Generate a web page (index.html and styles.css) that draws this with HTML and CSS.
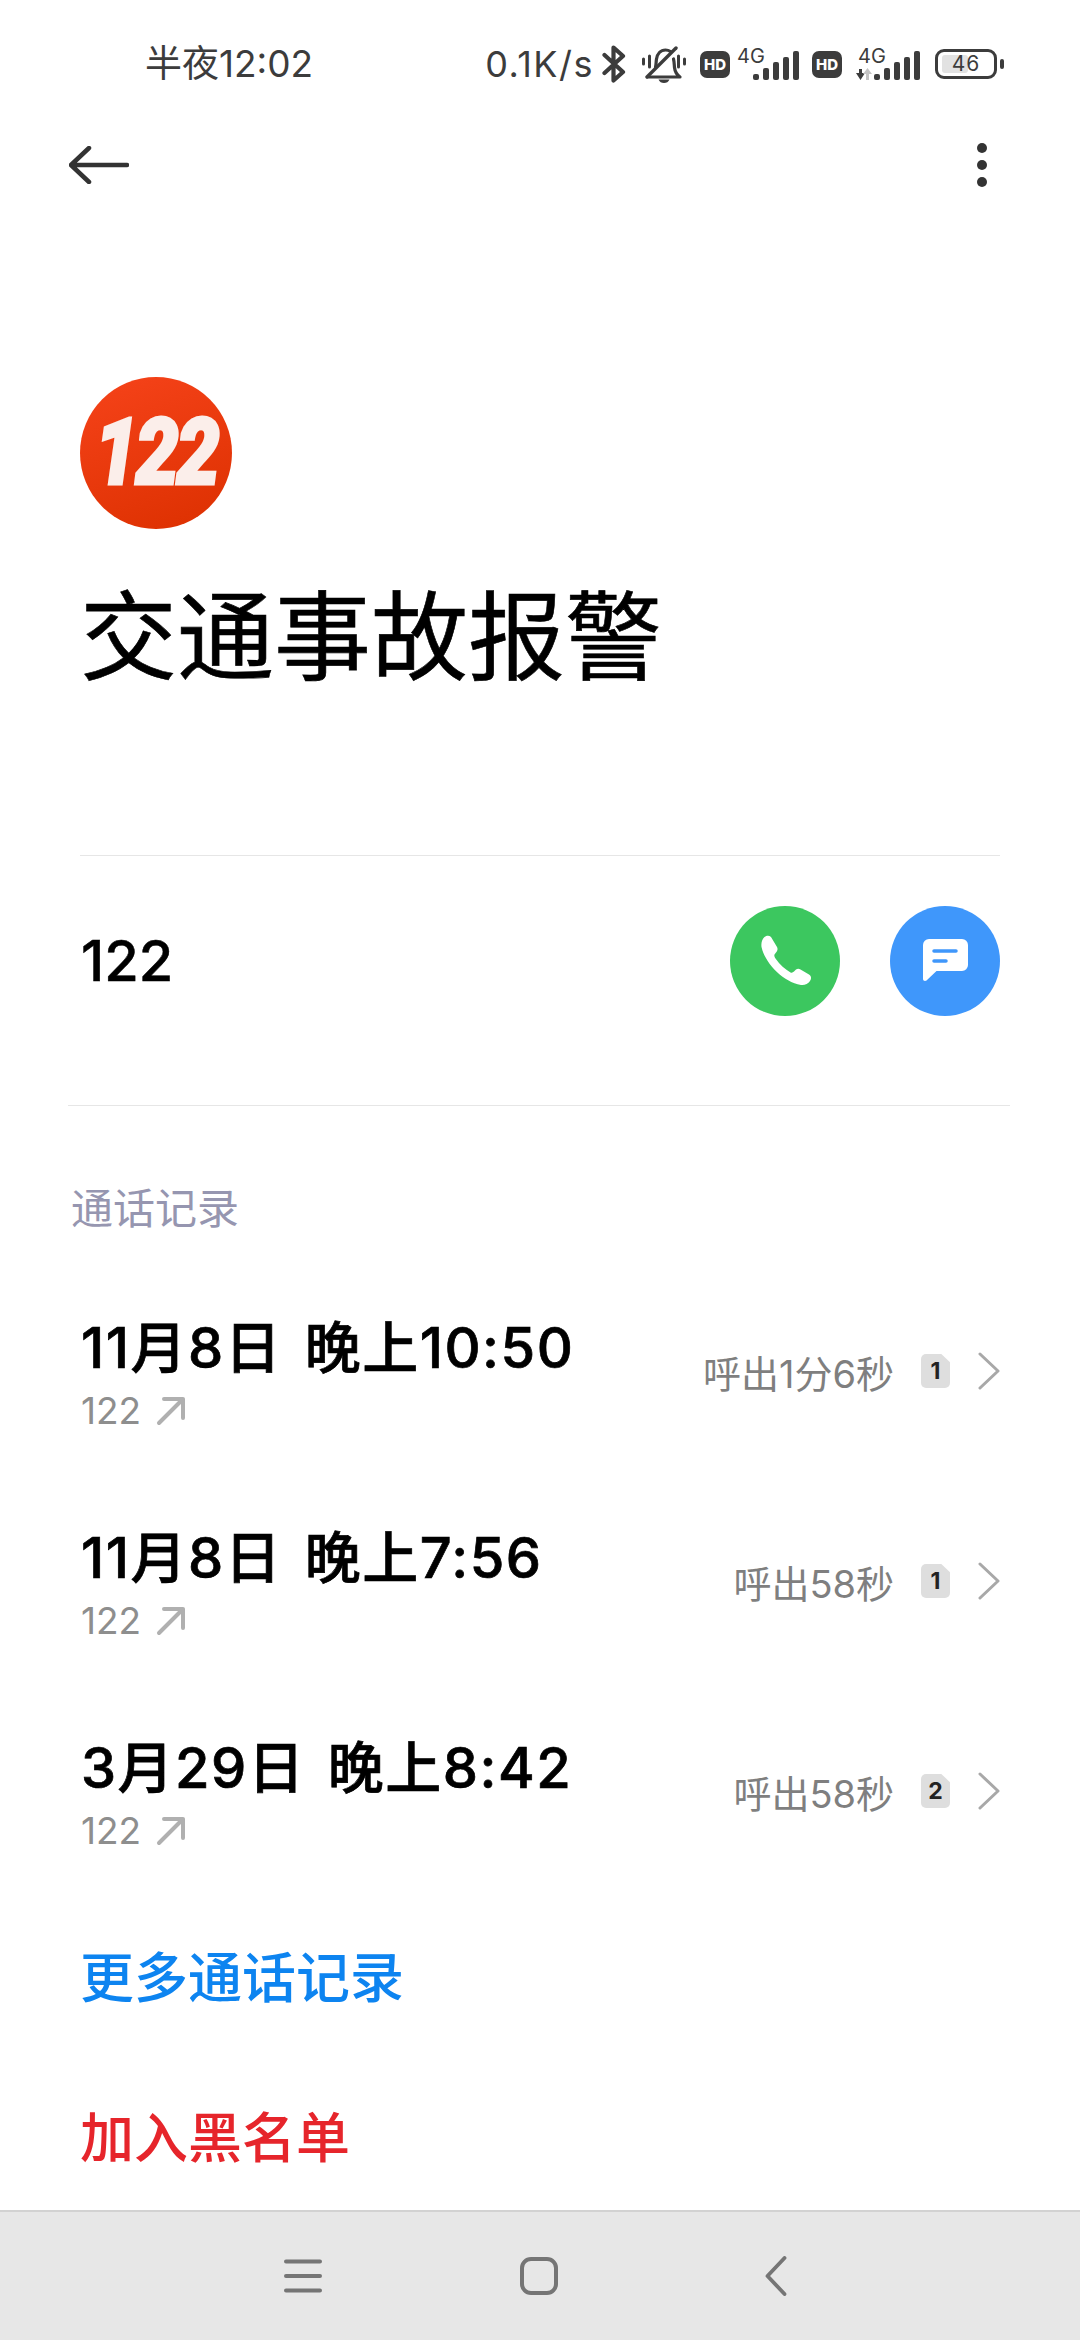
FILE: index.html
```html
<!DOCTYPE html>
<html lang="zh">
<head>
<meta charset="utf-8">
<title>交通事故报警</title>
<link rel="stylesheet" href="styles.css">
</head>
<body>
<div class="page">
  <header class="status">
    <span class="status-time">半夜12:02</span>
    <div class="status-right">
      <span class="status-speed">0.1K/s</span>
      <svg class="ic-bt" viewBox="0 0 24 38"><path d="M2.500 10 L21 27 L11.500 35.500 V2.500 L21 11 L2.500 28" fill="none" stroke="#3c3c3c" stroke-width="4.200" stroke-linecap="round" stroke-linejoin="round"/></svg>
      <svg class="ic-mute" viewBox="0 0 44 37"><g fill="none" stroke="#3c3c3c" stroke-linecap="round" stroke-linejoin="round"><path d="M1.500 13v5M7.500 10v11M42.500 13v5M36.500 10v11" stroke-width="3"/><path d="M6 31h32c-3.500-2.500-5-5-5.500-9.500-.3-3-.3-6-1-8.500M13.500 21c.7-2.500.5-5 1-8 .8-5 4-9 9-9 2 0 3.500.5 5 1.500" stroke-width="3.200"/><path d="M5 31 34 2" stroke-width="3.400"/></g><path d="M16.500 33.500h11c-1 2.500-3 3.500-5.500 3.500s-4.500-1-5.500-3.500z" fill="#3c3c3c"/></svg>
      <span class="hd">HD</span>
      <div class="sig">
        <span class="sig-label">4G</span>
        <svg class="sig-bars" viewBox="0 0 46 29"><g fill="#3c3c3c"><rect x="0" y="23" width="6" height="6" rx="2"/><rect x="10" y="17" width="6" height="12" rx="2"/><rect x="20" y="11" width="6" height="18" rx="2"/><rect x="30" y="6" width="6" height="23" rx="2"/><rect x="40" y="0" width="6" height="29" rx="2"/></g></svg>
      </div>
      <span class="hd hd-second">HD</span>
      <div class="sig sig-second">
        <span class="sig-label">4G</span>
        <svg class="sig-bars sig-bars-wide" viewBox="0 0 65 29"><path d="M4 18h3v4h3l-4.500 7L1 22h3z" fill="#3c3c3c"/><path d="M11 29v-6H8l4.500-6 4.500 6h-3v6z" fill="#c4c4c4"/><g fill="#3c3c3c"><rect x="19" y="23" width="6" height="6" rx="2"/><rect x="29" y="17" width="6" height="12" rx="2"/><rect x="39" y="11" width="6" height="18" rx="2"/><rect x="49" y="6" width="6" height="23" rx="2"/><rect x="59" y="0" width="6" height="29" rx="2"/></g></svg>
      </div>
      <div class="battery">
        <div class="battery-body"><span class="battery-fill"></span><span class="battery-num">46</span></div>
        <span class="battery-cap"></span>
      </div>
    </div>
  </header>

  <nav class="toolbar">
    <svg class="ic-back" viewBox="0 0 60 38"><path d="M20 2 2 19l18 17M2 19h56" fill="none" stroke="#333" stroke-width="4.500" stroke-linecap="round" stroke-linejoin="round"/></svg>
    <div class="more"><i></i><i></i><i></i></div>
  </nav>

  <section class="hero">
    <div class="logo"><span>122</span></div>
    <h1 class="title">交通事故报警</h1>
  </section>

  <section class="phone">
    <span class="phone-num">122</span>
    <div class="actions">
      <span class="action action-call">
        <svg viewBox="0 0 51 51"><path d="M3 2.500C5 .5 8 0 10 2L16 12C17 14 16.500 16 15 17.500L13.500 19.500C13 21 13.500 22 14.500 23.500C19 30 24 34 29.500 37.500C31 38 32 37.500 33 36.500L35 34.500C36.500 33.500 38 33.500 39.500 34.500L48 39.500C50.500 41 50.500 44 49 46C47 49 43.500 50.500 40 50C22 47 4 28 .5 12C0 8 1 4.500 3 2.500Z" fill="#fff"/></svg>
      </span>
      <span class="action action-msg">
        <svg viewBox="0 0 45 43"><path d="M6 0h33a6 6 0 0 1 6 6v20a6 6 0 0 1-6 6H13.500L3.500 41.500c-1.300 1-3.500.5-3.500-1.500V6a6 6 0 0 1 6-6z" fill="#fff"/><path d="M11 12h22M11 22h12" stroke="#3f97fb" stroke-width="3.500" stroke-linecap="round"/></svg>
      </span>
    </div>
  </section>

  <section class="log">
    <h2 class="log-head">通话记录</h2>
    <div class="log-list">
      <article class="row">
        <div class="row-main">
          <div class="row-title">11月8日 晚上10:50</div>
          <div class="row-sub">122<svg class="ic-out" viewBox="0 0 30 30"><path d="M8 3h19v19M27 3 3 27" fill="none" stroke="#b0b0b0" stroke-width="4" stroke-linecap="round" stroke-linejoin="round"/></svg></div>
        </div>
        <span class="row-dur">呼出1分6秒</span>
        <span class="sim">1</span>
        <svg class="ic-chev" viewBox="0 0 22 38"><path d="M2 2 20 19 2 36" fill="none" stroke="#a8a8a8" stroke-width="3" stroke-linecap="round" stroke-linejoin="round"/></svg>
      </article>
      <article class="row">
        <div class="row-main">
          <div class="row-title">11月8日 晚上7:56</div>
          <div class="row-sub">122<svg class="ic-out" viewBox="0 0 30 30"><path d="M8 3h19v19M27 3 3 27" fill="none" stroke="#b0b0b0" stroke-width="4" stroke-linecap="round" stroke-linejoin="round"/></svg></div>
        </div>
        <span class="row-dur">呼出58秒</span>
        <span class="sim">1</span>
        <svg class="ic-chev" viewBox="0 0 22 38"><path d="M2 2 20 19 2 36" fill="none" stroke="#a8a8a8" stroke-width="3" stroke-linecap="round" stroke-linejoin="round"/></svg>
      </article>
      <article class="row">
        <div class="row-main">
          <div class="row-title">3月29日 晚上8:42</div>
          <div class="row-sub">122<svg class="ic-out" viewBox="0 0 30 30"><path d="M8 3h19v19M27 3 3 27" fill="none" stroke="#b0b0b0" stroke-width="4" stroke-linecap="round" stroke-linejoin="round"/></svg></div>
        </div>
        <span class="row-dur">呼出58秒</span>
        <span class="sim">2</span>
        <svg class="ic-chev" viewBox="0 0 22 38"><path d="M2 2 20 19 2 36" fill="none" stroke="#a8a8a8" stroke-width="3" stroke-linecap="round" stroke-linejoin="round"/></svg>
      </article>
    </div>
    <a class="link link-more">更多通话记录</a>
    <a class="link link-block">加入黑名单</a>
  </section>

  <footer class="navbar">
    <svg class="ic-menu" viewBox="0 0 38 34"><path d="M2 2.500h34M2 17h34M2 31.500h34" stroke="#757575" stroke-width="4" stroke-linecap="round"/></svg>
    <svg class="ic-home" viewBox="0 0 38 38"><rect x="2" y="2" width="34" height="34" rx="9" fill="none" stroke="#757575" stroke-width="4"/></svg>
    <svg class="ic-navback" viewBox="0 0 22 40"><path d="M19.500 2 2.500 20l17 18" fill="none" stroke="#757575" stroke-width="3.800" stroke-linecap="round" stroke-linejoin="round"/></svg>
  </footer>
</div>
</body>
</html>
```

FILE: styles.css
```css
* { box-sizing: border-box; margin: 0; padding: 0; }
html, body { width: 1080px; height: 2340px; background: #fff; overflow: hidden; }
body { font-family: Inter, "Noto Sans CJK SC", sans-serif; color: #000; }
.page { width: 1080px; height: 2340px; display: flex; flex-direction: column; }

.status { height: 100px; padding: 28px 76px 0 145px; display: flex; align-items: center; justify-content: space-between; color: #3c3c3c; }
.status-time { font-size: 37px; line-height: 44px; }
.status-right { display: flex; align-items: center; }
.status-speed { font-size: 36px; line-height: 44px; letter-spacing: 1.500px; }
.ic-bt { width: 24px; height: 38px; margin-left: 8px; }
.ic-mute { width: 44px; height: 37px; margin-left: 16px; }
.hd { width: 30px; height: 27px; margin-left: 14px; background: #3c3c3c; border-radius: 7px; color: #fff; font-size: 15px; font-weight: 800; display: flex; align-items: center; justify-content: center; }
.hd-second { margin-left: 13px; }
.sig { position: relative; width: 62px; height: 32px; margin-left: 7px; }
.sig-second { width: 65px; margin-left: 13px; }
.sig-label { position: absolute; left: 0; top: -3px; font-size: 20px; line-height: 22px; color: #3c3c3c; }
.sig-second .sig-label { left: 3px; }
.sig-bars { position: absolute; right: 0; bottom: 0; width: 46px; height: 29px; }
.sig-bars-wide { width: 65px; }
.battery { display: flex; align-items: center; margin-left: 15px; }
.battery-body { width: 62px; height: 30px; border: 3px solid #3c3c3c; border-radius: 9px; position: relative; display: flex; align-items: center; justify-content: center; }
.battery-fill { position: absolute; left: 4px; top: 3px; bottom: 3px; width: 26px; background: #e2e2e2; border-radius: 3px; }
.battery-num { position: relative; font-size: 21px; line-height: 24px; letter-spacing: 1px; color: #3c3c3c; }
.battery-cap { width: 4px; height: 10px; margin-left: 3px; background: #3c3c3c; border-radius: 2px; }

.toolbar { height: 130px; padding: 0 93px 0 69px; display: flex; align-items: center; justify-content: space-between; }
.ic-back { width: 60px; height: 38px; }
.more { display: flex; flex-direction: column; gap: 7px; }
.more i { display: block; width: 10px; height: 10px; border-radius: 50%; background: #333; }

.hero { padding: 147px 80px 0; }
.logo { width: 152px; height: 152px; border-radius: 50%; background: linear-gradient(160deg, #f6431a, #dc3000); display: flex; align-items: center; justify-content: center; overflow: hidden; }
.logo span { font-family: Roboto, sans-serif; font-size: 92px; line-height: 100px; font-weight: 900; font-style: italic; letter-spacing: -3px; color: #fbeeea; -webkit-text-stroke: 3px #fbeeea; transform: scaleX(.84); }
.title { margin-top: 43px; font-size: 97px; line-height: 130px; font-weight: 400; color: #000; -webkit-text-stroke: .6px #000; }

.phone { margin: 153px 80px 0; border-top: 1px solid #e6e6e6; height: 210px; display: flex; align-items: center; justify-content: space-between; }
.phone-num { font-size: 56px; font-weight: 500; margin-left: 1px; -webkit-text-stroke: .5px #000; }
.actions { display: flex; gap: 50px; }
.action { width: 110px; height: 110px; border-radius: 50%; display: flex; align-items: center; justify-content: center; }
.action-call { background: #3cc75f; }
.action-call svg { width: 51px; height: 51px; margin-left: 3px; }
.action-msg { background: #3f97fb; }
.action-msg svg { width: 45px; height: 43px; }

.log { margin-top: 40px; border-top: 1px solid #e6e6e6; margin-left: 68px; margin-right: 70px; }
.log-head { margin-top: 73px; margin-left: 3px; font-size: 42px; line-height: 60px; font-weight: 400; color: #9696b0; }
.log-list { margin-top: 27px; margin-left: 13px; margin-right: 10px; }
.row { height: 210px; display: flex; align-items: center; }
.row-main { flex: 1; padding-top: 4px; }
.row-title { font-size: 56px; line-height: 76px; font-weight: 500; letter-spacing: 1.500px; word-spacing: 6px; -webkit-text-stroke: .7px #000; }
.row-sub { font-size: 37px; line-height: 50px; color: #8e8e8e; display: flex; align-items: center; gap: 15px; }
.ic-out { width: 30px; height: 30px; }
.row-dur { font-size: 38px; color: #7f7f7f; }
.sim { width: 29px; height: 34px; margin-left: 27px; background: #dedede; border-radius: 5px; font-size: 23px; font-weight: 700; color: #222; display: flex; align-items: center; justify-content: center; clip-path: polygon(0 0, 70% 0, 100% 24%, 100% 100%, 0 100%); }
.ic-chev { width: 22px; height: 38px; margin-left: 28px; }

.link { display: block; margin-left: 12px; font-size: 54px; line-height: 80px; font-weight: 500; }
.link-more { margin-top: 43px; color: #0d84f0; }
.link-block { margin-top: 80px; color: #e6252b; }

.navbar { margin-top: auto; height: 130px; border-top: 2px solid #d2d2d2; background: #e7e7e7; display: flex; align-items: center; padding-bottom: 0; }
.ic-menu { width: 38px; height: 34px; margin-left: 284px; }
.ic-home { width: 38px; height: 38px; margin-left: 198px; }
.ic-navback { width: 22px; height: 40px; margin-left: 207px; }
```
